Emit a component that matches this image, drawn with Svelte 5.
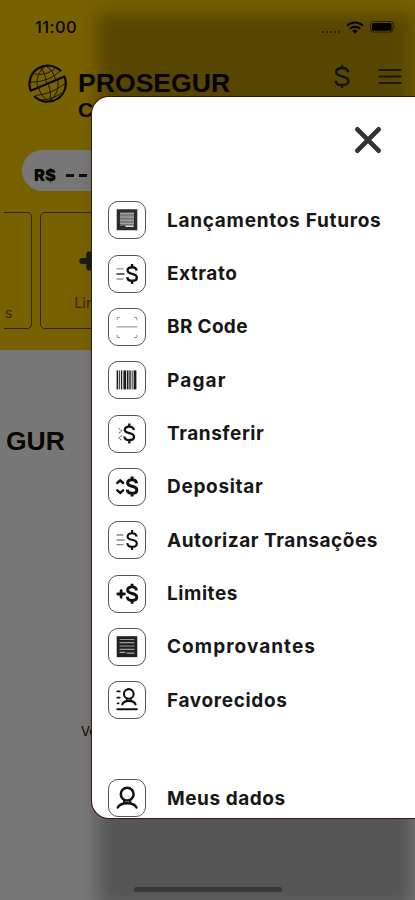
<script>
  const items = [
    { label: 'Lançamentos Futuros', icon: 'note', spacing: 0.72 },
    { label: 'Extrato', icon: 'statement', spacing: 0.52 },
    { label: 'BR Code', icon: 'scan', spacing: 0.32 },
    { label: 'Pagar', icon: 'barcode', spacing: 1.15 },
    { label: 'Transferir', icon: 'transfer', spacing: 0.55 },
    { label: 'Depositar', icon: 'deposit', spacing: 0.68 },
    { label: 'Autorizar Transações', icon: 'authorize', spacing: 0.55 },
    { label: 'Limites', icon: 'limits', spacing: 0.55 },
    { label: 'Comprovantes', icon: 'receipt', spacing: 1.05 },
    { label: 'Favorecidos', icon: 'contacts', spacing: 0.65 },
    { label: 'Meus dados', icon: 'person', spacing: 0.55 },
  ]
  const bars = [
    [8.6, 1.6], [11.2, 0.8], [12.9, 1.3], [15.4, 2.6], [18.8, 1.7],
    [21.3, 1.4], [23.7, 0.9], [25.6, 2.8],
  ]
</script>

{#snippet dollar(x, y, weight)}
  <path
    transform="translate({x} {y})"
    stroke-width={weight}
    stroke-linecap="butt"
    d="M10.3 6.7C10 4.4 8.4 3.2 5.8 3.2 3 3.2 1.3 4.4 1.3 6.4 1.3 8.8 3.4 9.3 5.8 9.8 8.5 10.4 10.5 11.1 10.5 13.4 10.5 15.5 8.8 16.8 5.8 16.8 2.8 16.8 1.1 15.4 1 13.1M5.8 0V3.4M5.8 16.6V20"
  />
{/snippet}

{#snippet glyph(icon)}
  <svg class="glyph" viewBox="0 0 38 38" fill="none" stroke="#111" stroke-linecap="round">
    {#if icon === 'note'}
      <path d="M8.7 8.2h20.6v21H8.7z" fill="#2c2c2c" stroke="none" />
      <path d="M12 11.3h14v13.5H12z" fill="#777" stroke="none" />
      <path d="M12.5 12.7h13M12.5 16h13M12.5 19.3h13M12.5 22.4h13" stroke="#aaa" stroke-width="1" />
      <path d="M18 25.2h7" stroke="#ddd" stroke-width="1.4" />
    {:else if icon === 'receipt'}
      <path d="M8.7 8.2h20.6v21H8.7z" fill="#202020" stroke="none" />
      <path d="M12 11.5h14M12 14.7h14M12 18h14M12 21.3h14" stroke="#999" stroke-width="1.2" />
      <path d="M12 24.4h5M19 25.2h7" stroke="#aaa" stroke-width="1.2" />
    {:else if icon === 'statement'}
      <path d="M9 13.8h6M9 24h6" stroke="#999" stroke-width="1.3" />
      <path d="M9 19h7" stroke="#333" stroke-width="1.5" />
      {@render dollar(18.3, 9, 2.4)}
    {:else if icon === 'authorize'}
      <path d="M9 14h6M9 19h7M9 23.7h6" stroke="#8a8a8a" stroke-width="1.3" />
      {@render dollar(18.3, 9, 2.1)}
    {:else if icon === 'scan'}
      <path d="M9.2 11.7V9.4h2.6M26.3 9.4h2.6v2.3M9.2 27.1v2.4h2.6M26.3 29.5h2.6v-2.4" stroke="#999" stroke-width="1" />
      <path d="M9 18.9h20" stroke="#888" stroke-width="1" />
    {:else if icon === 'barcode'}
      {#each bars as [x, w]}
        <rect {x} y="9.4" width={w} height="19" fill="#1c1c1c" stroke="none" />
      {/each}
    {:else if icon === 'transfer'}
      <path d="M11 13.6l2.6 2.2-2.6 2.2M13.4 20.8l-2.6 2.2 2.6 2.2" stroke="#777" stroke-width="1.1" stroke-dasharray="1.2 1.4" />
      {@render dollar(15.5, 8.4, 2.3)}
    {:else if icon === 'deposit'}
      <path d="M9.3 15l2.9-2.6 2.9 2.6M9.3 22.3l2.9 2.6 2.9-2.6" stroke-width="2.4" />
      {@render dollar(18.3, 8.5, 3)}
    {:else if icon === 'limits'}
      <path d="M9.8 19h6.6M13.1 15.7v6.6" stroke-width="2.8" />
      {@render dollar(18.3, 8.7, 2.9)}
    {:else if icon === 'contacts'}
      <circle cx="20.8" cy="12.9" r="4.8" stroke-width="2.1" />
      <path d="M14.3 23.4c1.2-3 4-3.5 6.5-3.5s5.5.5 6.7 3.5" stroke-width="2.1" />
      <path d="M18.7 17v2.5M22.9 17v2.5" stroke-width="1.6" />
      <path d="M9.3 28.3h19.6" stroke-width="1.9" />
      <path d="M9.3 10.4h2.4M9.3 16.6h2.4M9.6 22.3h1" stroke-width="1.8" />
    {:else}
      <circle cx="19.2" cy="15.2" r="6.4" stroke-width="2.5" />
      <path d="M9.8 28.6c1.8-3.9 5.6-4.3 9.4-4.3s7.5.4 9.3 4.3" stroke-width="2.4" />
      <path d="M16.2 21v3M22.2 21v3" stroke-width="2.2" />
    {/if}
  </svg>
{/snippet}

<div class="phone">
  <div class="hero">
    <div class="status">
      <time>11:00</time>
      <div class="signals">
        <span class="dots"></span>
        <svg width="18" height="13" viewBox="0 0 18 13" fill="none" stroke="#080600" stroke-width="2">
          <path d="M1 4.7a11.4 11.4 0 0 1 16 0M3.9 7.8a7.2 7.2 0 0 1 10.2 0" />
          <path d="M6.2 9.9a4 4 0 0 1 5.6 0L9 12.8z" fill="#080600" stroke="none" />
        </svg>
        <svg width="26" height="12" viewBox="0 0 26 12">
          <rect x=".5" y=".5" width="22.5" height="10.6" rx="3" fill="none" stroke="#342b10" />
          <rect x="2" y="2" width="19.5" height="7.7" rx="1.5" fill="#050500" />
          <path d="M24.2 4c1.1.5 1.1 3.2 0 3.7z" fill="#342b10" />
        </svg>
      </div>
    </div>

    <header>
      <svg class="globe" viewBox="0 0 40 40" fill="none" stroke="#090700">
        <path d="M33.2 8.1A17.9 17.9 0 0 0 3.6 27L36.6 13.2A17.9 17.9 0 0 1 7 32.2" stroke-width="2.1" stroke-linejoin="round" />
        <path d="M7.5 10.5c6 1.5 14.5 0 20-5.5M3 18.5c10 .8 22-3.500 28.300-10M10.300 24.200C8.500 15.500 11.500 7.500 18 2.800M19 20.500C18.500 13.500 16.500 8 13.200 4.500M28 16.800C26 9.500 22.500 4.800 18 2.800" stroke-width=".8" />
        <path d="M8.5 31.500c10-.5 20.500-5 28.500-11.500M14 36c7.500-.3 14.500-2.700 19.500-7M11.500 24c1.200 6 5 10.500 10.500 13.300M20.500 20.300c2.500 6 3 12 1.500 17M30 16.300c1.500 8-1.500 16-8 21" stroke-width=".8" />
      </svg>
      <div class="brand">
        <strong>PROSEGUR</strong>
        <small>CASH</small>
      </div>
      <svg class="money" viewBox="0 0 18 26" fill="none" stroke="#151914" stroke-width="2.5">
        <path d="M15.5 8.5C15 5.7 12.7 4.2 9 4.2c-4 0-6.1 1.7-6.1 4.2 0 3 2.8 3.7 6.1 4.5 3.8.9 6.7 1.7 6.7 4.7 0 2.8-2.5 4.2-6.7 4.2-4.3 0-6.5-1.7-6.8-4.6M9 1v3.500M9 21.500V25" />
      </svg>
      <svg class="burger" viewBox="0 0 24 17" stroke="#282108" stroke-width="2">
        <path d="M.5 2h23M.5 8.5h23M.5 15h23" />
      </svg>
    </header>

    <div class="balance">R$ <span class="dash"></span><span class="dash"></span><span class="dash"></span></div>

    <div class="cards">
      <div class="card first">s</div>
      <div class="card">
        <svg width="20" height="20" viewBox="0 0 20 20">
          <path d="M3.2 10h14M10.2 3.5v13" stroke="#181d18" stroke-width="5.8" stroke-linecap="round" />
        </svg>
        <span>Limites</span>
      </div>
    </div>
  </div>

  <div class="content">
    <strong>GUR</strong>
    <p>Ver</p>
  </div>

  <div class="shade"></div>
  <div class="home"></div>

  <nav class="drawer">
    <button aria-label="Fechar">
      <svg viewBox="0 0 28 28" stroke="#333" stroke-width="4.8" stroke-linecap="round">
        <path d="M3.4 3.4l21.2 21.2M24.6 3.4L3.4 24.6" />
      </svg>
    </button>
    <ul>
      {#each items as item}
        <li>
          <span class="tile">{@render glyph(item.icon)}</span>
          <span class="label" style="letter-spacing: {item.spacing}px">{item.label}</span>
        </li>
      {/each}
    </ul>
  </nav>
</div>

<style>
  .phone {
    position: relative;
    width: 415px;
    height: 900px;
    overflow: hidden;
    background: #777;
    color: #080600;
    font-family: Inter, sans-serif;
  }
  .hero {
    height: 350px;
    background: #786100;
    overflow: hidden;
  }
  .status {
    display: flex;
    justify-content: space-between;
    align-items: center;
    height: 54px;
    padding: 0 19px 0 35px;
    box-sizing: border-box;
  }
  .status time {
    font-size: 16.5px;
    font-weight: 500;
    letter-spacing: 0.4px;
  }
  .signals {
    display: flex;
    align-items: center;
    gap: 6px;
  }
  .dots {
    width: 18px;
    margin-top: 9px;
    border-top: 2px dotted #443700;
  }
  header {
    display: flex;
    height: 96px;
    padding-left: 27px;
  }
  .globe {
    width: 41px;
    height: 41px;
    margin-top: 9px;
  }
  .brand {
    display: flex;
    flex-direction: column;
    width: 255px;
    padding: 14px 0 0 10px;
    font-family: 'Liberation Sans', sans-serif;
    font-weight: 700;
  }
  .brand strong {
    font-size: 26.6px;
    line-height: 30px;
  }
  .brand small {
    font-size: 21px;
    line-height: 24px;
  }
  .money {
    width: 18px;
    height: 25px;
    margin-top: 10px;
  }
  .burger {
    width: 24px;
    height: 17px;
    margin: 14px 0 0 27px;
  }
  .balance {
    display: flex;
    align-items: center;
    height: 41px;
    margin-left: 22px;
    padding: 9px 0 0 12px;
    box-sizing: border-box;
    border-radius: 21px 0 0 21px;
    background: #777;
    font-size: 16.5px;
    font-weight: 900;
  }
  .dash {
    width: 8px;
    height: 3px;
    margin-left: 5px;
    background: #111;
  }
  .dash:first-of-type {
    margin-left: 10px;
  }
  .cards {
    display: flex;
    gap: 8px;
    padding: 21px 0 0 4px;
    color: #332a08;
    font-size: 14px;
    line-height: 18px;
  }
  .card {
    display: flex;
    flex-direction: column;
    align-items: center;
    width: 115px;
    height: 117px;
    box-sizing: border-box;
    border: 1.5px solid #292600;
    border-radius: 5px;
  }
  .card svg {
    margin: 38px 0 23px -18px;
  }
  .card span {
    margin-left: 2px;
    font-size: 14.5px;
  }
  .card.first {
    width: 28px;
    padding: 91px 0 0 1px;
    border-left: none;
    border-radius: 0 5px 5px 0;
    align-items: flex-start;
  }
  .content {
    padding: 76px 0 0 6px;
  }
  .content strong {
    display: block;
    font: 700 26.5px/30px 'Liberation Sans', sans-serif;
  }
  .content p {
    margin: 266px 0 0 75px;
    font-size: 13px;
    line-height: 18px;
  }
  .shade {
    position: absolute;
    inset: 13px 2px -8px 98px;
    background: rgba(0, 0, 0, 0.28);
    filter: blur(9px);
  }
  .home {
    position: absolute;
    left: 134px;
    bottom: 8px;
    width: 148px;
    height: 5px;
    border-radius: 3px;
    background: #363636;
  }
  .drawer {
    position: absolute;
    inset: 97px 0 82px 92px;
    display: flex;
    flex-direction: column;
    border-radius: 17px 0 0 17px;
    background: #fff;
    box-shadow: 0 0 0 1px #3a1a0c;
    overflow: hidden;
  }
  button {
    align-self: flex-end;
    width: 28px;
    height: 28px;
    margin: 29px 33px 0 0;
    padding: 0;
    border: none;
    background: none;
  }
  button svg {
    display: block;
  }
  ul {
    margin: 47.2px 0 0;
    padding: 0 0 0 16px;
    list-style: none;
  }
  li {
    display: flex;
    align-items: center;
    gap: 21px;
    height: 38px;
    margin-bottom: 15.35px;
  }
  li:last-child {
    margin: 60px 0 0;
  }
  .tile {
    width: 38px;
    height: 38px;
    box-sizing: border-box;
    border: 1.5px solid #555;
    border-radius: 10px;
  }
  .glyph {
    display: block;
    width: 38px;
    height: 38px;
    margin: -1px;
  }
  .label {
    color: #171717;
    font-size: 19px;
    font-weight: 700;
    white-space: nowrap;
  }
</style>
